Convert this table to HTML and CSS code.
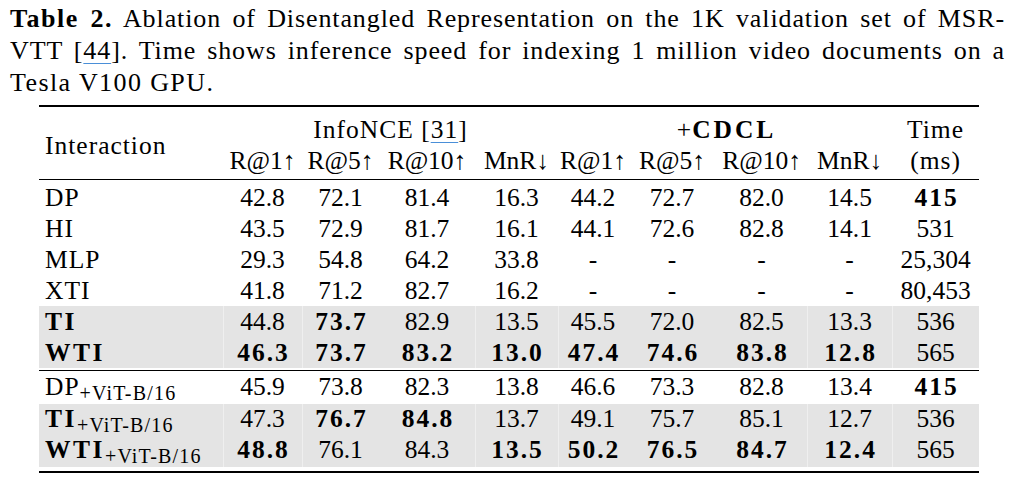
FILE: index.html
```html
<!DOCTYPE html>
<html lang="en">
<head>
<meta charset="utf-8">
<title>Table 2</title>
<link rel="stylesheet" href="styles.css">
</head>
<body>
<div class="caption">
  <div class="line just"><b class="cap-b">Table 2.</b> Ablation of Disentangled Representation on the 1K validation set of MSR-</div>
  <div class="line just">VTT [<span class="cite">44</span>]. Time shows inference speed for indexing 1 million video documents on a</div>
  <div class="line last-line">Tesla V100 GPU.</div>
</div>
<table class="tbl">
  <colgroup>
    <col class="c1"><col class="c2"><col class="c3"><col class="c4"><col class="c5">
    <col class="c6"><col class="c7"><col class="c8"><col class="c9"><col class="c10">
  </colgroup>
  <thead>
    <tr class="h1">
      <th rowspan="2" class="lab inter">Interaction</th>
      <th colspan="4" class="txt">InfoNCE [<span class="cite">31</span>]</th>
      <th colspan="4" class="txt">+<b class="cdcl">CDCL</b></th>
      <th class="txt">Time</th>
    </tr>
    <tr class="h2">
      <th>R@1↑</th><th>R@5↑</th><th>R@10↑</th><th>MnR↓</th>
      <th>R@1↑</th><th>R@5↑</th><th>R@10↑</th><th>MnR↓</th>
      <th class="txt">(ms)</th>
    </tr>
  </thead>
  <tbody>
    <tr class="first">
      <td class="lab">DP</td><td>42.8</td><td>72.1</td><td>81.4</td><td>16.3</td><td>44.2</td><td>72.7</td><td>82.0</td><td>14.5</td><td><b class="b">415</b></td>
    </tr>
    <tr>
      <td class="lab">HI</td><td>43.5</td><td>72.9</td><td>81.7</td><td>16.1</td><td>44.1</td><td>72.6</td><td>82.8</td><td>14.1</td><td>531</td>
    </tr>
    <tr>
      <td class="lab">MLP</td><td>29.3</td><td>54.8</td><td>64.2</td><td>33.8</td><td>-</td><td>-</td><td>-</td><td>-</td><td>25,304</td>
    </tr>
    <tr>
      <td class="lab">XTI</td><td>41.8</td><td>71.2</td><td>82.7</td><td>16.2</td><td>-</td><td>-</td><td>-</td><td>-</td><td>80,453</td>
    </tr>
    <tr class="g">
      <td class="lab"><b class="bl">TI</b></td><td>44.8</td><td><b class="b">73.7</b></td><td>82.9</td><td>13.5</td><td>45.5</td><td>72.0</td><td>82.5</td><td>13.3</td><td>536</td>
    </tr>
    <tr class="g gend">
      <td class="lab"><b class="bl">WTI</b></td><td><b class="b">46.3</b></td><td><b class="b">73.7</b></td><td><b class="b">83.2</b></td><td><b class="b">13.0</b></td><td><b class="b">47.4</b></td><td><b class="b">74.6</b></td><td><b class="b">83.8</b></td><td><b class="b">12.8</b></td><td>565</td>
    </tr>
    <tr class="vit sep">
      <td class="lab">DP<span class="sub">+ViT-B/16</span></td><td>45.9</td><td>73.8</td><td>82.3</td><td>13.8</td><td>46.6</td><td>73.3</td><td>82.8</td><td>13.4</td><td><b class="b">415</b></td>
    </tr>
    <tr class="g vit2">
      <td class="lab"><b class="bl">TI</b><span class="sub">+ViT-B/16</span></td><td>47.3</td><td><b class="b">76.7</b></td><td><b class="b">84.8</b></td><td>13.7</td><td>49.1</td><td>75.7</td><td>85.1</td><td>12.7</td><td>536</td>
    </tr>
    <tr class="g vit3 last">
      <td class="lab"><b class="bl">WTI</b><span class="sub">+ViT-B/16</span></td><td><b class="b">48.8</b></td><td>76.1</td><td>84.3</td><td><b class="b">13.5</b></td><td><b class="b">50.2</b></td><td><b class="b">76.5</b></td><td><b class="b">84.7</b></td><td><b class="b">12.4</b></td><td>565</td>
    </tr>
  </tbody>
</table>
</body>
</html>
```

FILE: styles.css
```css
* { box-sizing: border-box; }
html, body { margin: 0; padding: 0; background: #fff; }
body {
  font-family: "Liberation Serif", "Times New Roman", serif;
  color: #000;
  width: 1024px;
  height: 490px;
  overflow: hidden;
}

/* caption */
.caption {
  padding: 3px 0 0 10px;
  width: 1005px;
  font-size: 26px;
  line-height: 32px;
  letter-spacing: 0.9px;
}
.caption .just { text-align: justify; text-align-last: justify; }
.caption .last-line { letter-spacing: 1.4px; }
.cap-b { font-weight: 700; letter-spacing: 1.5px; }
.cite {
  text-decoration: underline;
  text-decoration-color: #4a8fd8;
  text-decoration-thickness: 1px;
  text-underline-offset: 4px;
}

/* table */
.tbl {
  margin: 6px 0 0 39px;
  width: 940px;
  table-layout: fixed;
  border-collapse: separate;
  border-spacing: 0;
  border-top: 2px solid #000;
  border-bottom: 2px solid #000;
  font-size: 25.5px;
}
.c1 { width: 184px; }
.c2 { width: 79px; }
.c3 { width: 77px; }
.c4 { width: 96px; }
.c5 { width: 83px; }
.c6 { width: 70px; }
.c7 { width: 88px; }
.c8 { width: 91px; }
.c9 { width: 85px; }
.c10 { width: 87px; }

.tbl th, .tbl td {
  padding: 0;
  font-weight: 400;
  text-align: center;
  white-space: nowrap;
  line-height: 31px;
  vertical-align: top;
}
.tbl .lab { text-align: left; padding-left: 6px; letter-spacing: 1px; }
.tbl .txt { letter-spacing: 1px; }

.h1 th { padding-top: 7px; }
.h1 th.inter {
  vertical-align: middle;
  padding-bottom: 3px;
  border-bottom: 1px solid #000;
}
.h2 th { padding-bottom: 3px; border-bottom: 1px solid #000; }

.cdcl { font-weight: 700; letter-spacing: 3px; margin-right: -3px; }
.b { font-weight: 700; letter-spacing: 2px; margin-right: -2px; }
.bl { font-weight: 700; letter-spacing: 2.5px; }

.first td { padding-top: 2px; }

.g td {
  background: #e4e4e4;
  background-clip: padding-box;
}
.g td:nth-child(2), .g td:nth-child(3), .g td:nth-child(5),
.g td:nth-child(6), .g td:nth-child(9), .g td:nth-child(10) {
  box-shadow: inset 1px 0 0 #efefef;
}
.gend td { border-bottom: 2px solid transparent; }

.sep td { border-top: 1px solid #000; }
.vit td { line-height: 31px; padding-bottom: 2px; }
.vit2 td { line-height: 29px; padding-bottom: 2px; }
.vit3 td { line-height: 29px; padding-bottom: 3px; }
.last td { border-bottom: 4px solid transparent; }

.sub {
  font-size: 20px;
  font-weight: 400;
  letter-spacing: 1.2px;
  line-height: 0;
  vertical-align: -5px;
}
```
